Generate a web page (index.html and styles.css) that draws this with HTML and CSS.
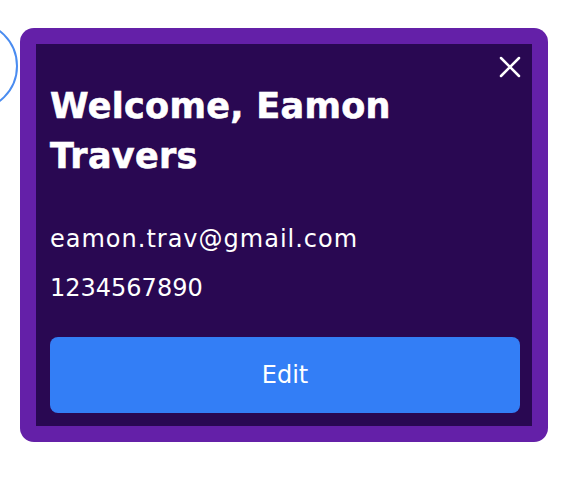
FILE: index.html
```html
<!DOCTYPE html>
<html>
<head>
<meta charset="utf-8">
<link rel="stylesheet" href="styles.css">
</head>
<body>
<div class="stage">
  <div class="avatar-ring"></div>
  <div class="popover">
    <div class="popover-inner">
      <button class="close" aria-label="Close">
        <svg width="22" height="22" viewBox="0 0 22 22"><path d="M2 2 L20 20 M20 2 L2 20" stroke="#fff" stroke-width="2.5" stroke-linecap="round"/></svg>
      </button>
      <h1 class="title">Welcome, Eamon Travers</h1>
      <p class="info email">eamon.trav@gmail.com</p>
      <p class="info phone">1234567890</p>
      <button class="edit">Edit</button>
    </div>
  </div>
</div>
</body>
</html>
```
FILE: styles.css
```css
html, body {
  margin: 0;
  padding: 0;
  background: #ffffff;
}
.stage {
  position: relative;
  width: 568px;
  height: 484px;
  overflow: hidden;
  padding: 28px 0 0 20px;
  box-sizing: border-box;
  font-family: "DejaVu Sans", "Inter", sans-serif;
}
.avatar-ring {
  position: absolute;
  left: -72px;
  top: 21px;
  width: 86px;
  height: 86px;
  border: 2px solid #4a8cf0;
  border-radius: 50%;
}
.popover {
  position: relative;
  width: 528px;
  height: 414px;
  box-sizing: border-box;
  background: #6420a8;
  border-radius: 14px;
  padding: 16px;
}
.popover-inner {
  position: relative;
  height: 100%;
  box-sizing: border-box;
  background: #290852;
  padding: 0 12px 13px 14px;
  display: flex;
  flex-direction: column;
}
.close {
  position: absolute;
  top: 12px;
  right: 11px;
  width: 22px;
  height: 22px;
  padding: 0;
  border: 0;
  background: none;
  display: block;
}
.close svg { display: block; }
.title {
  margin: 37px 0 0 0;
  width: 380px;
  color: #ffffff;
  font-size: 35px;
  line-height: 50px;
  font-weight: 700;
  letter-spacing: 0.3px;
  -webkit-text-stroke: 0.6px #ffffff;
}
.info {
  margin: 0;
  color: #ffffff;
  font-size: 24px;
  line-height: 33px;
  font-weight: 400;
}
.email { margin-top: 42px; letter-spacing: 1px; }
.phone { margin-top: 16px; }
.edit {
  margin-top: auto;
  height: 76px;
  width: 100%;
  border: 0;
  border-radius: 8px;
  background: #337ef6;
  color: #ffffff;
  font-family: inherit;
  font-size: 24px;
  font-weight: 400;
}
```
